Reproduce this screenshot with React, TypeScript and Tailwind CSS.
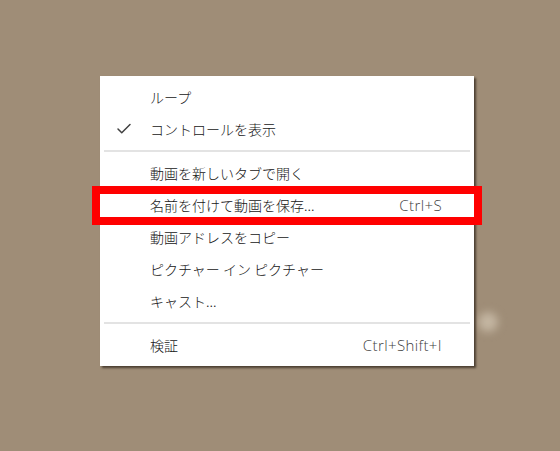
import { Check } from 'lucide-react'

type MenuItem = {
  label: string
  shortcut?: string
  checked?: boolean
}

const groups: MenuItem[][] = [
  [{ label: 'ループ' }, { label: 'コントロールを表示', checked: true }],
  [
    { label: '動画を新しいタブで開く' },
    { label: '名前を付けて動画を保存...', shortcut: 'Ctrl+S' },
    { label: '動画アドレスをコピー' },
    { label: 'ピクチャー イン ピクチャー' },
    { label: 'キャスト...' },
  ],
  [{ label: '検証', shortcut: 'Ctrl+Shift+I' }],
]

function Row({ item }: { item: MenuItem }) {
  return (
    <div className="flex h-8 items-center pr-8">
      <div className="flex w-12 justify-center">
        {item.checked && <Check size={18} strokeWidth={2} className="text-[#404040]" />}
      </div>
      <span className="flex-1 pl-0.5 text-[14px] font-light text-[#161616]">{item.label}</span>
      {item.shortcut && (
        <span className="font-['Open_Sans',sans-serif] text-[15px] font-light tracking-[0.4px] text-[#404040]">
          {item.shortcut}
        </span>
      )}
    </div>
  )
}

export default function App() {
  return (
    <div className="relative h-[451px] w-[560px] overflow-hidden bg-[#9f8d77] pl-[100px] pt-[76px] font-['Noto_Sans_CJK_JP','Noto_Sans',sans-serif]">
      <div className="absolute left-[478px] top-[312px] h-5 w-5 rounded-full bg-[#c4b6a2] blur-[4px]" />
      <div className="relative w-[374px] bg-white py-[5px] shadow-[2px_2px_2px_rgba(40,30,20,0.7)]">
        {groups.map((group, gi) => (
          <div key={gi}>
            {gi > 0 && (
              <div className="flex h-3 items-center px-1">
                <div className="h-[2px] w-full bg-[#e3e3e3]" />
              </div>
            )}
            {group.map((item) => (
              <Row key={item.label} item={item} />
            ))}
          </div>
        ))}
        <div className="absolute left-[-8px] top-[110px] h-[39px] w-[390px] border-[8px] border-[#ff0000]" />
      </div>
    </div>
  )
}
